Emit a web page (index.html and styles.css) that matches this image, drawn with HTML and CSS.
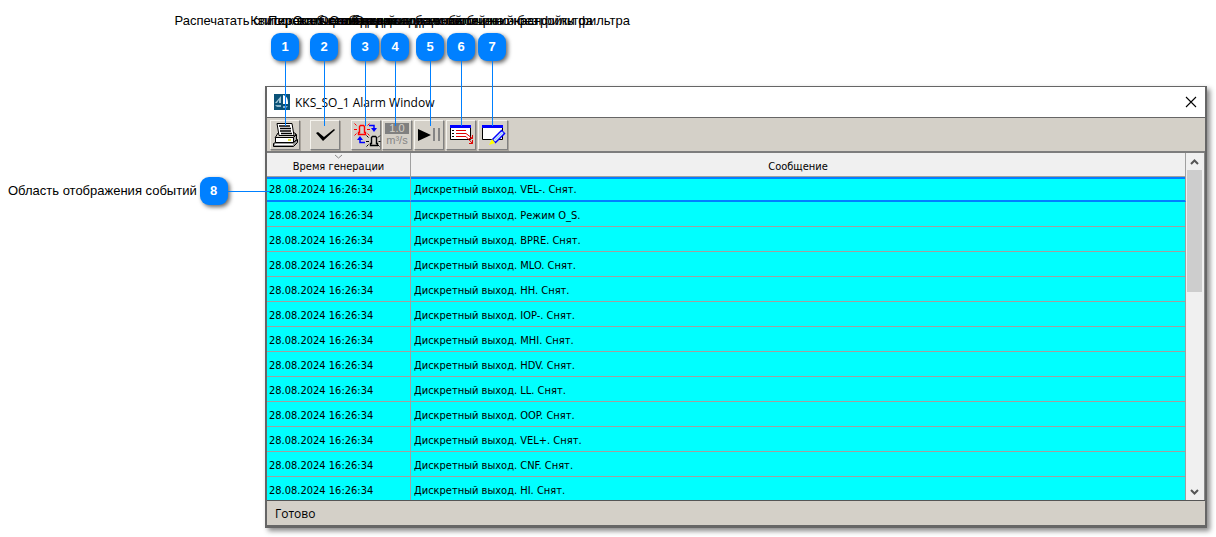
FILE: index.html
```html
<!DOCTYPE html>
<html lang="ru">
<head>
<meta charset="utf-8">
<title>KKS_SO_1 Alarm Window</title>
<link rel="stylesheet" href="styles.css">
</head>
<body>
<main class="figure">
  <div class="callout c1"><span class="caption">Распечатать список всех сообщений</span><b class="badge">1</b></div>
  <div class="callout c2"><span class="caption">Квитировать сообщения</span><b class="badge">2</b></div>
  <div class="callout c3"><span class="caption">Переключение вида сообщений</span><b class="badge">3</b></div>
  <div class="callout c4"><span class="caption">Сообщения с единицами величин</span><b class="badge">4</b></div>
  <div class="callout c5"><span class="caption">Остановка вывода событий на экран</span><b class="badge">5</b></div>
  <div class="callout c6"><span class="caption">Отображение всех сообщений без фильтра</span><b class="badge">6</b></div>
  <div class="callout c7"><span class="caption">Открыть диалоговое окно настройки фильтра</span><b class="badge">7</b></div>
  <div class="side-callout"><span class="caption">Область отображения событий</span><b class="badge">8</b></div>

  <section class="window">
    <header class="titlebar">
      <svg class="logo" width="16" height="16" viewBox="0 0 16 16"><path fill="#0b5278" d="M0 0h16v16H0z"/><path fill="#9fc3d4" d="M1 9 7 2v7H5V6L3 9z"/><path fill="#fff" d="M9 1c4 1 5 4 5 9H9z"/><path fill="#8bb5ca" d="M1 11h6v2H3zM9 12h5l-2 2H9z"/></svg>
      <h1 class="title">KKS_SO_1 Alarm Window</h1>
      <button class="close" aria-label="Закрыть"><svg width="12" height="12" viewBox="0 0 12 12"><path d="m1 1 10 10M11 1 1 11" stroke="#000" stroke-width="1.1"/></svg></button>
    </header>
    <div class="toolbar">
      <button class="tool" aria-label="Печать"><svg width="26" height="26" viewBox="0 0 26 26" stroke="#000"><path d="m6 11-3 5h18l3-4-3-2z" fill="#d4d0c8"/><path d="M5 1.500h15l2 12H7z" fill="#fff"/><path d="M7 4h11M8 6.500h11M8 9h11M9 11.500h11" stroke-width="1.300"/><path d="M3.500 15.500h18v5h-18z" fill="#fff"/><path d="m21.500 15.500 3-3v5l-3 3z" fill="#aaa"/><path d="M16 18h3" stroke="#d8d800" stroke-width="1.500"/><path d="m3.500 20.500-2 1v3h20l4-4v-3l-4 3z" fill="#999"/><path d="M3 22.500h18" stroke="#fff"/></svg></button>
      <button class="tool gap" aria-label="Квитировать"><svg width="26" height="26" viewBox="0 0 26 26"><path d="m4 11 2-1 6 5L22 7l1 1-12 11z"/></svg></button>
      <button class="tool gap" aria-label="Переключить"><svg width="26" height="26" viewBox="0 0 26 26" fill="none"><g id="siren" stroke="#f00"><path d="M5.500 12.500v-2h1v-6l1-1h3l1 1v6h1v2z" stroke-width="1.400"/><path d="m1.500 1.500 2 2M1 7.500h3M1.500 13.500l2-2M16.500 1.500l-2 2M14 7.500h3M16.500 13.500l-2-2"/></g><g stroke="#000"><path d="M17.500 23.500v-2h1v-6l1-1h3l1 1v6h1v2z" stroke-width="1.400"/><path d="m13.500 13.500 2 2M13 19.500h3M13.500 24.500l2-2M27 13.500l-2 2M25.500 19.500h2M26.500 24.500l-2-2"/></g><path d="M16 3.500h5V6M12 20.500H7V18" stroke="#00f" stroke-width="1.500"/><path d="M18 6h6l-3 4zM4 18h6l-3-4z" fill="#00f"/></svg></button>
      <button class="tool units" aria-label="Единицы измерения"><span class="value">1.0</span><span class="unit">m³/s</span></button>
      <button class="tool" aria-label="Пауза"><svg width="26" height="26" viewBox="0 0 26 26"><path d="M2 7v12l13-6z"/><path d="M17 6h2v13h-2zM22 6h2v13h-2z" fill="#858585"/></svg></button>
      <button class="tool" aria-label="Список"><svg width="26" height="26" viewBox="0 0 26 26"><path d="M2.500 4.500h20v13h-20z" fill="#fff" stroke="#000"/><path d="M2 3h21v3H2z" fill="#00f"/><g stroke="#e00000" fill="none"><path d="M8 8.500h10M8 11.500h10M8 14.500h10M18 11.500l6.500 5M18 14.500l6.500 7M24.500 13v3.500H21M24.500 18v3.500H21" /></g><path d="M4 8.500h2M4 11.500h2M4 14.500h2" stroke="#000"/></svg></button>
      <button class="tool" aria-label="Фильтр"><svg width="26" height="26" viewBox="0 0 26 26"><path d="M2.500 4.500h20v13h-20z" fill="#fff" stroke="#000"/><path d="M2 3h21v3H2z" fill="#00f"/><path d="m12.500 17.500 9-9 3 3-9 9z" fill="#fff" stroke="#00f" stroke-width="1.500"/><path d="m14 19 9-9" stroke="#9cf" stroke-width="1.500"/><path d="m12 17-3 6 6-2z" fill="#ff0"/></svg></button>
    </div>
    <div class="content">
      <table class="events">
        <thead><tr><th class="time"><svg class="sort" width="9" height="5" viewBox="0 0 9 5"><path d="m1 1 3.500 3L8 1" fill="none" stroke="#888"/></svg>Время генерации</th><th>Сообщение</th></tr></thead>
        <tbody>
          <tr class="selected"><td>28.08.2024 16:26:34</td><td>Дискретный выход. VEL-. Снят.</td></tr>
          <tr><td>28.08.2024 16:26:34</td><td>Дискретный выход. Режим O_S.</td></tr>
          <tr><td>28.08.2024 16:26:34</td><td>Дискретный выход. BPRE. Снят.</td></tr>
          <tr><td>28.08.2024 16:26:34</td><td>Дискретный выход. MLO. Снят.</td></tr>
          <tr><td>28.08.2024 16:26:34</td><td>Дискретный выход. HH. Снят.</td></tr>
          <tr><td>28.08.2024 16:26:34</td><td>Дискретный выход. IOP-. Снят.</td></tr>
          <tr><td>28.08.2024 16:26:34</td><td>Дискретный выход. MHI. Снят.</td></tr>
          <tr><td>28.08.2024 16:26:34</td><td>Дискретный выход. HDV. Снят.</td></tr>
          <tr><td>28.08.2024 16:26:34</td><td>Дискретный выход. LL. Снят.</td></tr>
          <tr><td>28.08.2024 16:26:34</td><td>Дискретный выход. OOP. Снят.</td></tr>
          <tr><td>28.08.2024 16:26:34</td><td>Дискретный выход. VEL+. Снят.</td></tr>
          <tr><td>28.08.2024 16:26:34</td><td>Дискретный выход. CNF. Снят.</td></tr>
          <tr><td>28.08.2024 16:26:34</td><td>Дискретный выход. HI. Снят.</td></tr>
        </tbody>
      </table>
      <div class="scrollbar">
        <button class="arrow" aria-label="Вверх"><svg width="9" height="6" viewBox="0 0 9 6"><path d="m1 5 3.500-3.500L8 5" fill="none" stroke="#555" stroke-width="2"/></svg></button>
        <div class="track"><div class="thumb"></div></div>
        <button class="arrow" aria-label="Вниз"><svg width="9" height="6" viewBox="0 0 9 6"><path d="m1 1 3.500 3.500L8 1" fill="none" stroke="#555" stroke-width="2"/></svg></button>
      </div>
    </div>
    <footer class="status">Готово</footer>
  </section>
</main>
</body>
</html>
```
FILE: styles.css
```css
* { box-sizing: border-box; }
body { margin: 0; background: #fff; color: #000; font-family: "Liberation Sans", Arial, sans-serif; font-size: 13px; }
button { font: inherit; padding: 0; border: 0; background: none; display: flex; align-items: center; justify-content: center; }
svg { display: block; flex: none; overflow: visible; }
.figure { position: relative; padding: 86px 9px 9px 265px; }

/* Numbered callouts laid over the window */
.callout { position: absolute; top: 13px; width: 28px; height: 113px; display: flex; flex-direction: column; align-items: center; gap: 4px; z-index: 1; pointer-events: none; }
.callout::after { content: ""; width: 1px; flex: 1; margin-top: -4px; background: #0080ff; }
.c1 { left: 271px; }
.c2 { left: 310px; }
.c3 { left: 351px; }
.c4 { left: 381px; }
.c5 { left: 416px; }
.c6 { left: 447px; }
.c7 { left: 478px; }
.caption { white-space: nowrap; line-height: 16px; }
.badge { flex: none; width: 28px; height: 28px; border-radius: 9px; background: #0080ff; color: #fff; line-height: 28px; text-align: center; box-shadow: 2px 2px 4px #0009; }
.side-callout { position: absolute; top: 177px; left: 0; width: 270px; display: flex; align-items: center; gap: 3px; padding-left: 8px; z-index: 1; }
.side-callout::after { content: ""; height: 1px; flex: 1; margin-left: -3px; background: #0080ff; }

.window { border: 2px solid #666; border-top-width: 1px; border-bottom-width: 3px; box-shadow: 3px 3px 5px #0007; background: #d4d0c8; }
.titlebar { display: flex; align-items: center; height: 30px; padding: 0 8px 0 7px; background: #fff; }
.title { flex: 1; margin: 0 0 0 5px; font: 400 12px "Open Sans", "Noto Sans", sans-serif; }
.close { width: 12px; height: 24px; }
.toolbar { display: flex; align-items: center; gap: 2px; height: 36px; padding-left: 3px; border-top: 1px solid #666; border-bottom: 2px solid #7d7d7d; }
.tool { width: 30px; height: 30px; border: 1px solid; border-color: #f5f3ee #808080 #808080 #f5f3ee; box-shadow: 1px 1px 0 #aaa59d; background: #d4d0c8; }
.gap { margin-left: 8px; }
.gap + .gap { margin-left: 9px; margin-right: -1px; }
.units { flex-direction: column; color: #858585; font-size: 11px; line-height: 11px; gap: 1px; }
.value { width: 24px; background: #808080; color: #d4d0c8; text-align: center; }

.content { display: flex; height: 347px; overflow: hidden; background: #fff; font-family: "DejaVu Sans Condensed", "DejaVu Sans", sans-serif; font-size: 11px; }
.events { flex: 1; border-collapse: separate; border-spacing: 0; table-layout: fixed; height: 349px; }
.events th { position: relative; height: 24px; padding: 4px 0 0; border-right: 1px solid #a0a0a0; border-bottom: 1px solid #a0a0a0; background: #f0f0f0; font-weight: 400; text-align: center; }
.time { width: 144px; }
.sort { position: absolute; top: 1px; left: 67px; }
.events td { height: 25px; padding: 2px 2px 0; border-right: 1px solid #a0a0a0; border-bottom: 1px solid #a0a0a0; background: #0ff; white-space: nowrap; }
.events td + td { padding-left: 3px; }
.events .selected td { border-bottom: 2px solid #0080ff; box-shadow: inset 0 2px #0080ff; }
.scrollbar { display: flex; flex-direction: column; width: 19px; padding: 0 2px 0 1px; background: #f0f0f0; border-right: 1px solid #888; }
.arrow { height: 17px; }
.track { flex: 1; }
.thumb { height: 39%; background: #cdcdcd; }
.status { height: 25px; padding-left: 8px; border-top: 1px solid #555; font: 12px/25px "Open Sans", "Noto Sans", sans-serif; }
```
